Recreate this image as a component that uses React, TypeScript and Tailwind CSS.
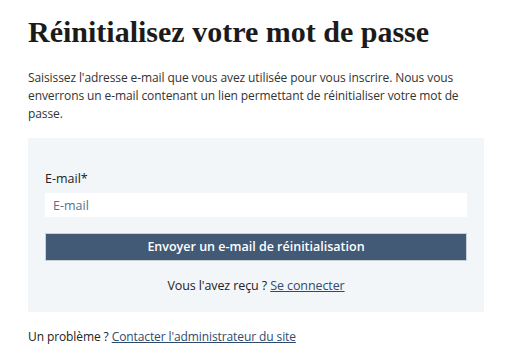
import React, { useState } from "react";

export default function App() {
  const [email, setEmail] = useState("");
  return (
    <div className="min-h-screen bg-white px-[28px] pt-[12px] text-[#222] font-['Open_Sans',sans-serif]">
      <h1 className="font-['Liberation_Serif',serif] text-[30px] font-bold leading-[40px] text-[#1b1b1b]">
        Réinitialisez votre mot de passe
      </h1>
      <p className="mt-[17px] whitespace-nowrap text-[12px] leading-[18px] tracking-[-0.1px] text-[#333]">
        Saisissez l'adresse e-mail que vous avez utilisée pour vous inscrire. Nous vous
        <br />
        enverrons un e-mail contenant un lien permettant de réinitialiser votre mot de
        <br />
        passe.
      </p>
      <div className="mt-[15px] w-[456px] bg-[#f3f6f9] px-[17px] pt-[33px] pb-[18px]">
        <label className="block text-[12.5px] leading-[16px] text-[#222]">E-mail*</label>
        <input
          type="email"
          value={email}
          onChange={(e) => setEmail(e.target.value)}
          placeholder="E-mail"
          className="mt-[6px] h-[24px] w-full bg-white px-[8px] text-[12.5px] text-[#222] outline-none placeholder:text-[#5b6f86]"
        />
        <button className="mt-[16px] h-[28px] w-full border border-[#c9d0d8] bg-[#425a75] text-[12.5px] font-semibold text-white">
          Envoyer un e-mail de réinitialisation
        </button>
        <p className="mt-[17px] text-center text-[12.5px] leading-[16px] tracking-[-0.1px] text-[#222]">
          Vous l'avez reçu ?{" "}
          <a href="#" className="text-[#2f4b6c] underline">
            Se connecter
          </a>
        </p>
      </div>
      <p className="mt-[17px] text-[12px] leading-[16px] tracking-[-0.1px] text-[#222]">
        Un problème ?{" "}
        <a href="#" className="text-[#2f4b6c] underline">
          Contacter l'administrateur du site
        </a>
      </p>
    </div>
  );
}
